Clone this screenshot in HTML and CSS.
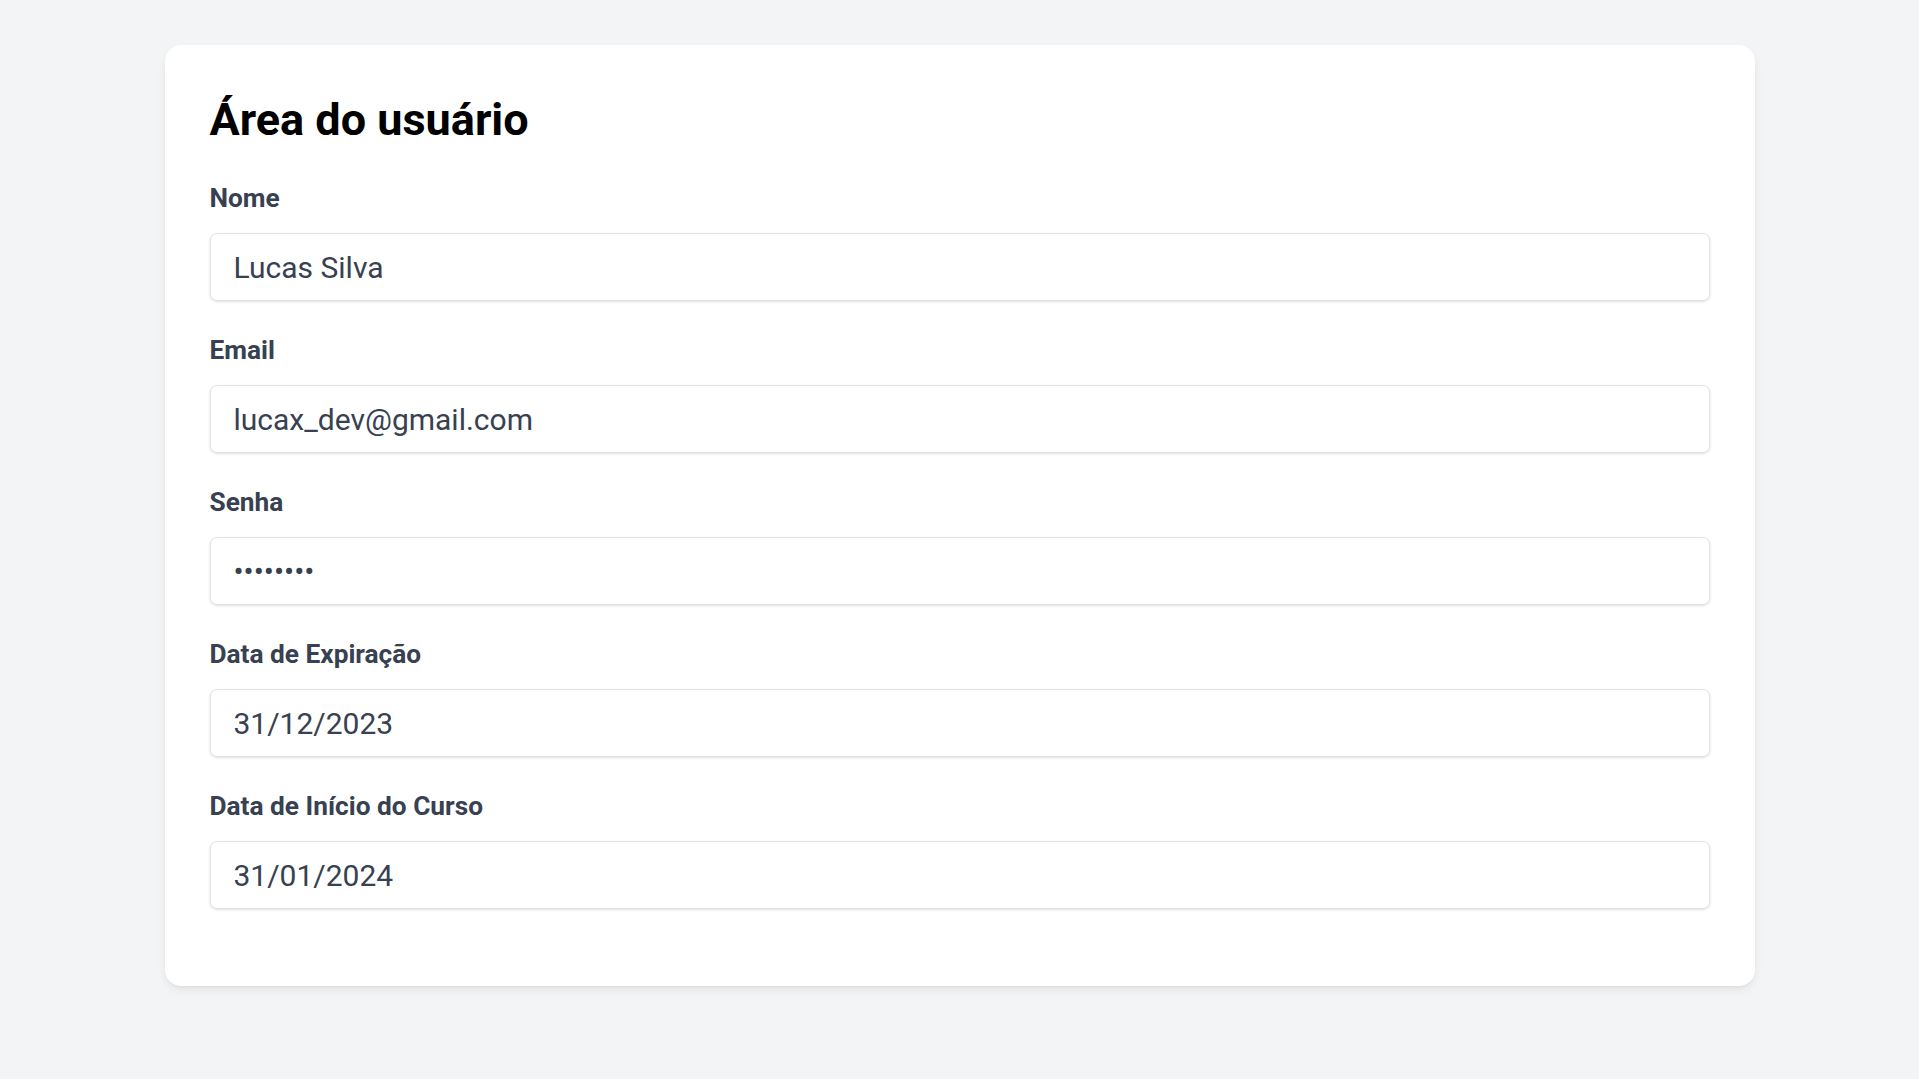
FILE: index.html
```html
<!DOCTYPE html>
<html lang="pt-BR">
<head>
<meta charset="utf-8">
<title>Área do usuário</title>
<link rel="stylesheet" href="styles.css">
</head>
<body>
<main class="card">
  <h1 class="title">Área do usuário</h1>
  <form class="form">
    <div class="field">
      <label class="label" for="nome">Nome</label>
      <input class="input" id="nome" type="text" value="Lucas Silva" readonly>
    </div>
    <div class="field">
      <label class="label" for="email">Email</label>
      <input class="input" id="email" type="email" value="lucax_dev@gmail.com" readonly>
    </div>
    <div class="field">
      <label class="label" for="senha">Senha</label>
      <input class="input" id="senha" type="password" value="12345678" readonly>
    </div>
    <div class="field">
      <label class="label" for="exp">Data de Expiração</label>
      <input class="input" id="exp" type="text" value="31/12/2023" readonly>
    </div>
    <div class="field">
      <label class="label" for="inicio">Data de Início do Curso</label>
      <input class="input" id="inicio" type="text" value="31/01/2024" readonly>
    </div>
  </form>
</main>
</body>
</html>
```
FILE: styles.css
```css
* { box-sizing: border-box; }
html, body { margin: 0; padding: 0; }
body {
  background: #f3f4f6;
  font-family: Roboto, "Liberation Sans", sans-serif;
  min-height: 1079px;
  padding-top: 45px;
}
.card {
  width: 1590px;
  margin: 0 auto;
  background: #ffffff;
  border-radius: 16px;
  box-shadow: 0 4px 10px -1px rgba(0,0,0,0.08), 0 2px 4px -2px rgba(0,0,0,0.06);
  padding: 40px 45px 47px 45px;
}
.title {
  margin: 8px 0 32px;
  font-size: 45px;
  line-height: 54px;
  font-weight: 700;
  color: #000;
}
.form { display: flex; flex-direction: column; }
.field {
  display: flex;
  flex-direction: column;
  margin-bottom: 30px;
}
.label {
  font-size: 26.25px;
  line-height: 39px;
  font-weight: 700;
  color: #374151;
  margin-bottom: 15px;
}
.input {
  height: 68px;
  width: 100%;
  border: 1px solid #e2e4e8;
  border-radius: 7px;
  background: #fff;
  box-shadow: 0 1px 3px rgba(0,0,0,0.12);
  padding: 0 23px;
  font-family: Roboto, "Liberation Sans", sans-serif;
  font-size: 30px;
  color: #374151;
  outline: none;
}
```
